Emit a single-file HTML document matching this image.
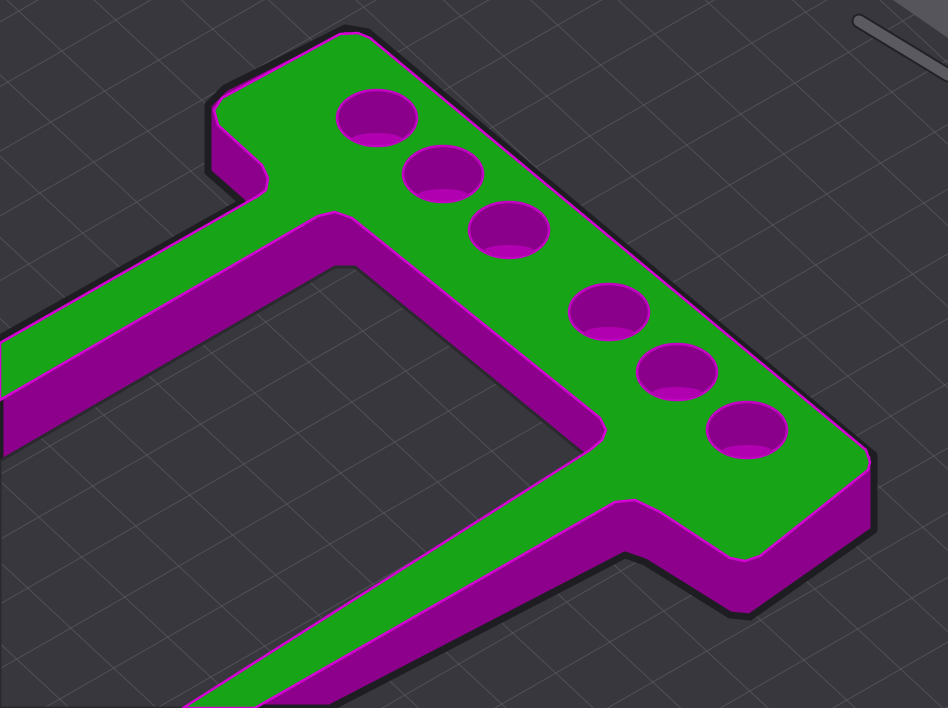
<!DOCTYPE html>
<html><head><meta charset="utf-8"><style>
html,body{margin:0;padding:0;width:948px;height:708px;overflow:hidden;background:#38373d}
svg{display:block}
</style></head><body>
<svg width="948" height="708" viewBox="0 0 948 708" xmlns="http://www.w3.org/2000/svg">
<defs>
<pattern id="grid" patternUnits="userSpaceOnUse" width="1" height="1" patternTransform="matrix(54,-31,43,40,38,517)">
<path d="M0 0H1M0 0V1" stroke="#55545a" stroke-width="0.028" fill="none"/>
</pattern>
</defs>
<rect width="948" height="708" fill="#38373d"/>
<rect width="948" height="708" fill="url(#grid)"/>
<polygon points="893,0 948,0 948,38" fill="#56555b"/>
<line x1="859" y1="21" x2="948" y2="75" stroke="#222226" stroke-width="15" stroke-linecap="round"/>
<line x1="859" y1="21" x2="948" y2="75" stroke="#5b5a61" stroke-width="11" stroke-linecap="round"/>
<polygon points="0,338 242,202 208,172 208,105 225,88 345,28 368,32 874,455 874,530 750,617 730,615 645,562 625,555 330,708 0,708" fill="#8c008c" stroke="#1e1e22" stroke-width="7" stroke-linejoin="round"/>
<polygon points="0,461 335,267 355,267 585,455 575,468 183,708 0,708" fill="#38373d"/>
<polygon points="0,461 335,267 355,267 585,455 575,468 183,708 0,708" fill="url(#grid)"/>
<polygon points="0,461 335,267 355,267 585,455 575,468 183,708 0,708" fill="none" stroke="#2a2a2e" stroke-width="3"/>
<polygon points="0,343 258,196 266,190 268,178 262,165 218,125 214,110 222,98 340,34 358,33 370,38 866,450 870,462 868,470 760,556 745,561 730,558 660,512 635,500 615,502 255,708 183,708 590,450 602,440 606,430 600,418 352,218 335,212 318,216 0,400" fill="#17a417" stroke="#d400d4" stroke-width="2.5" stroke-linejoin="round"/>
<g fill="#8a008a" stroke="#c400c4" stroke-width="2.5">
<ellipse cx="377" cy="118" rx="40" ry="28"/>
<ellipse cx="443" cy="174" rx="40" ry="28"/>
<ellipse cx="509" cy="230" rx="40" ry="28"/>
<ellipse cx="609" cy="312" rx="40" ry="28"/>
<ellipse cx="677" cy="372" rx="40" ry="28"/>
<ellipse cx="747" cy="430" rx="40" ry="28"/>
</g>
<g fill="#b000b0">
<ellipse cx="377" cy="139" rx="25" ry="6"/>
<ellipse cx="443" cy="195" rx="25" ry="6"/>
<ellipse cx="509" cy="251" rx="25" ry="6"/>
<ellipse cx="609" cy="333" rx="25" ry="6"/>
<ellipse cx="677" cy="393" rx="25" ry="6"/>
<ellipse cx="747" cy="451" rx="25" ry="6"/>
</g>
</svg>
</body></html>
